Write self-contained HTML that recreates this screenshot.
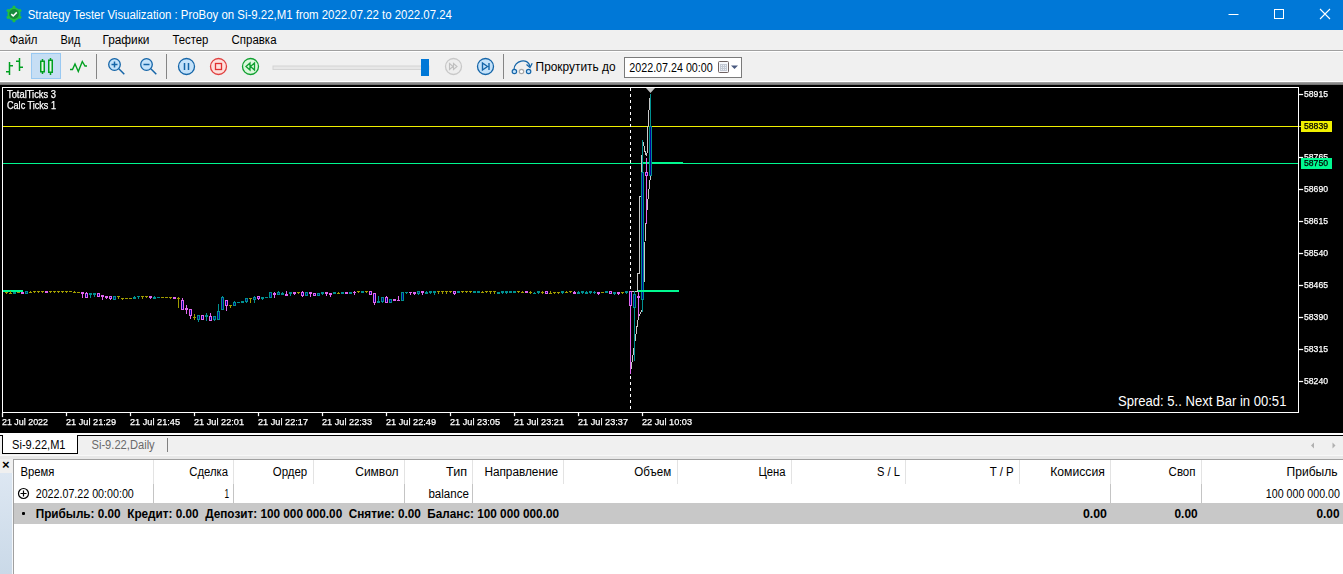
<!DOCTYPE html>
<html><head><meta charset="utf-8"><style>
*{margin:0;padding:0;box-sizing:border-box}
html,body{width:1343px;height:574px;overflow:hidden;background:#f0f0f0;font-family:"Liberation Sans",sans-serif;position:relative}
.a{position:absolute}
text{white-space:pre}
</style></head><body>
<div class="a" style="left:0;top:0;width:1343px;height:30px;background:#0078d7"></div>
<svg class="a" style="left:5px;top:5px" width="18" height="18" viewBox="5 5 18 18">
<g fill="#22c040"><circle cx="14" cy="14" r="6.6"/><rect x="12.6" y="5.8" width="2.8" height="3" rx="0.6" transform="rotate(0 14 14)"/><rect x="12.6" y="5.8" width="2.8" height="3" rx="0.6" transform="rotate(60 14 14)"/><rect x="12.6" y="5.8" width="2.8" height="3" rx="0.6" transform="rotate(120 14 14)"/><rect x="12.6" y="5.8" width="2.8" height="3" rx="0.6" transform="rotate(180 14 14)"/><rect x="12.6" y="5.8" width="2.8" height="3" rx="0.6" transform="rotate(240 14 14)"/><rect x="12.6" y="5.8" width="2.8" height="3" rx="0.6" transform="rotate(300 14 14)"/></g>
<circle cx="14" cy="14" r="4.9" fill="#178a3c"/>
<path d="M11.3 14.2l1.9 1.8 3.6-3.6" stroke="#fff" stroke-width="1.6" fill="none"/>
</svg>
<svg class="a" style="left:1220px;top:0" width="123" height="30">
<rect x="8.5" y="14" width="10" height="1" fill="#fff"/>
<rect x="54.5" y="9.5" width="9" height="9" fill="none" stroke="#fff"/>
<path d="M100 9l10 10M110 9l-10 10" stroke="#fff" stroke-width="1.1"/>
</svg>
<div class="a" style="left:0;top:50px;width:1343px;height:1px;background:#a0a0a0"></div>
<div class="a" style="left:0;top:51px;width:1343px;height:1px;background:#fff"></div>

<svg class="a" style="left:0;top:50px" width="760" height="35" viewBox="0 50 760 35">
<g stroke="#00a020" stroke-width="1.5" fill="none">
<path d="M9.5 62v13M6 71.75h3.5M9.5 65.75h3.5M19.5 58v13M16 61.25h3.5M19.5 67.25h3.5"/>
</g>
<rect x="31.5" y="53.5" width="29" height="25" fill="#c6def4" stroke="#99c9f2"/>
<g stroke="#00a020" stroke-width="1.5">
<path d="M42.5 59v15M50.5 58v17"/>
<rect x="40.75" y="61.25" width="3.5" height="10.5" fill="#e6f8e6"/>
<rect x="48.75" y="60.25" width="3.5" height="12" fill="#e6f8e6"/>
</g>
<polyline points="70,69.5 72.5,69.5 75,64 78.3,71.5 82.3,61.5 85,66 87,66" fill="none" stroke="#00a020" stroke-width="1.4"/>
<rect x="96" y="54" width="1" height="25" fill="#858585"/>
<g stroke="#1565a8" stroke-width="1.3" fill="#c4e2fa">
<circle cx="114.5" cy="64.5" r="5.8"/>
<circle cx="146.5" cy="64.5" r="5.8"/>
</g>
<g stroke="#1565a8" stroke-width="1.5" fill="none">
<path d="M111.5 64.5h6M114.5 61.5v6M118.8 68.8l5.5 5.5M143.5 64.5h6M150.8 68.8l5.5 5.5"/>
</g>
<rect x="166" y="54" width="1" height="25" fill="#858585"/>
<circle cx="186.5" cy="66.5" r="8" stroke="#1565a8" stroke-width="1.3" fill="#c4e2fa"/>
<path d="M184.5 63v7M188.5 63v7" stroke="#1565a8" stroke-width="1.5"/>
<circle cx="218.5" cy="66.5" r="8" stroke="#e04040" stroke-width="1.3" fill="#fde0dc"/>
<rect x="215.5" y="63.5" width="6" height="6" stroke="#e03030" stroke-width="1.3" fill="none"/>
<circle cx="250.5" cy="66.5" r="8" stroke="#10a030" stroke-width="1.3" fill="#dcf8dc"/>
<path d="M250 63l-4 3.5 4 3.5zM254.5 63l-4 3.5 4 3.5z" stroke="#10a030" stroke-width="1.3" fill="none"/>
<rect x="273" y="66" width="156" height="3.5" fill="#e7e7e7" stroke="#d4d4d4" stroke-width="1"/>
<rect x="421" y="59" width="8" height="17" fill="#0078d7"/>
<circle cx="453.5" cy="66.5" r="8" stroke="#c8c8c8" stroke-width="1.3" fill="#eeeeee"/>
<path d="M449.5 63.5l3.5 3-3.5 3zM453.5 63.5l3.5 3-3.5 3z" stroke="#c0c0c0" stroke-width="1.1" fill="none"/>
<circle cx="485.5" cy="66.5" r="8" stroke="#1565a8" stroke-width="1.3" fill="#c4e2fa"/>
<path d="M482.5 63v7l5-3.5zM489 63v7" stroke="#1565a8" stroke-width="1.4" fill="none"/>
<rect x="503" y="54" width="1" height="25" fill="#858585"/>
<path d="M514 69.5C514 60.5 528 57 530 66.5" stroke="#1565a8" stroke-width="1.3" fill="none"/>
<path d="M526.5 64.5l3.5 3 2.2-4.2" stroke="#1565a8" stroke-width="1.3" fill="none"/>
<circle cx="514.4" cy="71.5" r="2.2" stroke="#1565a8" stroke-width="1.2" fill="#c4e2fa"/>
<circle cx="521.5" cy="71.5" r="2.2" stroke="#a8a8a8" stroke-width="1.2" fill="#fff"/>
<circle cx="528.6" cy="71.5" r="2.2" stroke="#1565a8" stroke-width="1.2" fill="#c4e2fa"/>
<rect x="624.5" y="57.5" width="117" height="20" fill="#fff" stroke="#7a7a7a"/>
<rect x="718.5" y="61.5" width="10" height="11" rx="1" fill="#f6f7fb" stroke="#6e6262"/>
<rect x="720" y="64" width="7" height="7" fill="#c3c9d4"/>
<g fill="#eef0f6"><rect x="721" y="65" width="1" height="1"/><rect x="723" y="65" width="1" height="1"/><rect x="725" y="65" width="1" height="1"/><rect x="721" y="67" width="1" height="1"/><rect x="723" y="67" width="1" height="1"/><rect x="725" y="67" width="1" height="1"/><rect x="721" y="69" width="1" height="1"/><rect x="723" y="69" width="1" height="1"/><rect x="725" y="69" width="1" height="1"/></g>
<path d="M731 65.5h7l-3.5 3.5z" fill="#4a5a80"/>
</svg>

<div class="a" style="left:0;top:81px;width:1343px;height:1px;background:#fff"></div>
<div class="a" style="left:0;top:82px;width:1343px;height:3px;background:linear-gradient(#a8a8a8,#6a6a6a)"></div>

<svg class="a" style="left:0;top:0" width="1343" height="574" viewBox="0 0 1343 574" shape-rendering="crispEdges">
<rect x="0" y="85" width="1343" height="348" fill="#000"/>
<rect x="2" y="87" width="1297" height="1" fill="#fff"/>
<rect x="2" y="412" width="1297" height="1" fill="#fff"/>
<rect x="2" y="87" width="1" height="326" fill="#fff"/>
<rect x="1298" y="87" width="1" height="326" fill="#fff"/>
<rect x="3" y="126" width="1295" height="1" fill="#f0f000"/>
<rect x="3" y="163" width="1295" height="1" fill="#00f890"/>
<rect x="643" y="162" width="40" height="2" fill="#00f890"/>
<rect x="3" y="290" width="20" height="2" fill="#00f890"/>
<rect x="630" y="88" width="1" height="3" fill="#fff"/>
<rect x="630" y="94" width="1" height="3" fill="#fff"/>
<rect x="630" y="100" width="1" height="3" fill="#fff"/>
<rect x="630" y="106" width="1" height="3" fill="#fff"/>
<rect x="630" y="112" width="1" height="3" fill="#fff"/>
<rect x="630" y="118" width="1" height="3" fill="#fff"/>
<rect x="630" y="124" width="1" height="3" fill="#fff"/>
<rect x="630" y="130" width="1" height="3" fill="#fff"/>
<rect x="630" y="136" width="1" height="3" fill="#fff"/>
<rect x="630" y="142" width="1" height="3" fill="#fff"/>
<rect x="630" y="148" width="1" height="3" fill="#fff"/>
<rect x="630" y="154" width="1" height="3" fill="#fff"/>
<rect x="630" y="160" width="1" height="3" fill="#fff"/>
<rect x="630" y="166" width="1" height="3" fill="#fff"/>
<rect x="630" y="172" width="1" height="3" fill="#fff"/>
<rect x="630" y="178" width="1" height="3" fill="#fff"/>
<rect x="630" y="184" width="1" height="3" fill="#fff"/>
<rect x="630" y="190" width="1" height="3" fill="#fff"/>
<rect x="630" y="196" width="1" height="3" fill="#fff"/>
<rect x="630" y="202" width="1" height="3" fill="#fff"/>
<rect x="630" y="208" width="1" height="3" fill="#fff"/>
<rect x="630" y="214" width="1" height="3" fill="#fff"/>
<rect x="630" y="220" width="1" height="3" fill="#fff"/>
<rect x="630" y="226" width="1" height="3" fill="#fff"/>
<rect x="630" y="232" width="1" height="3" fill="#fff"/>
<rect x="630" y="238" width="1" height="3" fill="#fff"/>
<rect x="630" y="244" width="1" height="3" fill="#fff"/>
<rect x="630" y="250" width="1" height="3" fill="#fff"/>
<rect x="630" y="256" width="1" height="3" fill="#fff"/>
<rect x="630" y="262" width="1" height="3" fill="#fff"/>
<rect x="630" y="268" width="1" height="3" fill="#fff"/>
<rect x="630" y="274" width="1" height="3" fill="#fff"/>
<rect x="630" y="280" width="1" height="3" fill="#fff"/>
<rect x="630" y="286" width="1" height="3" fill="#fff"/>
<rect x="630" y="292" width="1" height="3" fill="#fff"/>
<rect x="630" y="298" width="1" height="3" fill="#fff"/>
<rect x="630" y="304" width="1" height="3" fill="#fff"/>
<rect x="630" y="310" width="1" height="3" fill="#fff"/>
<rect x="630" y="316" width="1" height="3" fill="#fff"/>
<rect x="630" y="322" width="1" height="3" fill="#fff"/>
<rect x="630" y="328" width="1" height="3" fill="#fff"/>
<rect x="630" y="334" width="1" height="3" fill="#fff"/>
<rect x="630" y="340" width="1" height="3" fill="#fff"/>
<rect x="630" y="346" width="1" height="3" fill="#fff"/>
<rect x="630" y="352" width="1" height="3" fill="#fff"/>
<rect x="630" y="358" width="1" height="3" fill="#fff"/>
<rect x="630" y="364" width="1" height="3" fill="#fff"/>
<rect x="630" y="370" width="1" height="3" fill="#fff"/>
<rect x="630" y="376" width="1" height="3" fill="#fff"/>
<rect x="630" y="382" width="1" height="3" fill="#fff"/>
<rect x="630" y="388" width="1" height="3" fill="#fff"/>
<rect x="630" y="394" width="1" height="3" fill="#fff"/>
<rect x="630" y="400" width="1" height="3" fill="#fff"/>
<rect x="630" y="406" width="1" height="3" fill="#fff"/>
<g fill="none" stroke="#c8c8c8" stroke-width="1">
<polyline points="630.5,291.5 637.5,291.5 637.5,273.5 639.5,273.5 639.5,196.5 641.5,196.5 641.5,159 643.5,142 644.5,150 646.5,156 647.5,150 647.5,135 648.5,118 649.5,102 650.5,94"/>
<polyline points="650.5,176 648.5,194 647.5,205 646.5,216 645.5,231 644.5,253 644.5,276 642.5,300 642,310 638.5,317 637.5,323 630.5,373"/>
</g>
<rect x="6" y="292" width="1" height="2" fill="#a09c00"/>
<rect x="5" y="292" width="3" height="1" fill="#a09c00"/>
<rect x="10" y="291" width="1" height="3" fill="#a09c00"/>
<rect x="9" y="293" width="3" height="1" fill="#a09c00"/>
<rect x="14" y="292" width="1" height="2" fill="#009090"/>
<rect x="13" y="292" width="3" height="2" fill="#009090"/>
<rect x="17" y="292" width="3" height="1" fill="#a09c00"/>
<rect x="22" y="292" width="1" height="2" fill="#e066f0"/>
<rect x="21" y="292" width="3" height="2" fill="#e066f0"/>
<rect x="26" y="291" width="1" height="3" fill="#009090"/>
<rect x="25" y="291" width="3" height="3" fill="#009090"/>
<rect x="26" y="292" width="1" height="1" fill="#000098"/>
<rect x="30" y="291" width="1" height="2" fill="#a09c00"/>
<rect x="29" y="292" width="3" height="1" fill="#a09c00"/>
<rect x="34" y="291" width="1" height="2" fill="#a09c00"/>
<rect x="33" y="291" width="3" height="1" fill="#a09c00"/>
<rect x="38" y="291" width="1" height="2" fill="#a09c00"/>
<rect x="37" y="291" width="3" height="1" fill="#a09c00"/>
<rect x="42" y="291" width="1" height="2" fill="#a09c00"/>
<rect x="41" y="291" width="3" height="1" fill="#a09c00"/>
<rect x="46" y="291" width="1" height="2" fill="#e066f0"/>
<rect x="45" y="291" width="3" height="2" fill="#e066f0"/>
<rect x="50" y="291" width="1" height="2" fill="#a09c00"/>
<rect x="49" y="291" width="3" height="1" fill="#a09c00"/>
<rect x="54" y="291" width="1" height="2" fill="#a09c00"/>
<rect x="53" y="291" width="3" height="1" fill="#a09c00"/>
<rect x="58" y="291" width="1" height="2" fill="#a09c00"/>
<rect x="57" y="291" width="3" height="1" fill="#a09c00"/>
<rect x="62" y="291" width="1" height="2" fill="#a09c00"/>
<rect x="61" y="291" width="3" height="1" fill="#a09c00"/>
<rect x="66" y="291" width="1" height="2" fill="#a09c00"/>
<rect x="65" y="291" width="3" height="1" fill="#a09c00"/>
<rect x="69" y="291" width="3" height="1" fill="#a09c00"/>
<rect x="74" y="291" width="1" height="2" fill="#a09c00"/>
<rect x="73" y="292" width="3" height="1" fill="#a09c00"/>
<rect x="77" y="292" width="3" height="1" fill="#a09c00"/>
<rect x="82" y="292" width="1" height="6" fill="#e066f0"/>
<rect x="81" y="292" width="3" height="2" fill="#e066f0"/>
<rect x="86" y="292" width="1" height="6" fill="#e066f0"/>
<rect x="85" y="293" width="3" height="5" fill="#e066f0"/>
<rect x="86" y="294" width="1" height="3" fill="#000098"/>
<rect x="90" y="293" width="1" height="5" fill="#009090"/>
<rect x="89" y="293" width="3" height="2" fill="#009090"/>
<rect x="94" y="293" width="1" height="4" fill="#009090"/>
<rect x="93" y="293" width="3" height="2" fill="#009090"/>
<rect x="98" y="293" width="1" height="4" fill="#e066f0"/>
<rect x="97" y="293" width="3" height="4" fill="#e066f0"/>
<rect x="98" y="294" width="1" height="2" fill="#000098"/>
<rect x="102" y="295" width="1" height="5" fill="#e066f0"/>
<rect x="101" y="295" width="3" height="2" fill="#e066f0"/>
<rect x="106" y="296" width="1" height="3" fill="#e066f0"/>
<rect x="105" y="296" width="3" height="2" fill="#e066f0"/>
<rect x="110" y="296" width="1" height="4" fill="#e066f0"/>
<rect x="109" y="296" width="3" height="3" fill="#e066f0"/>
<rect x="110" y="297" width="1" height="1" fill="#000098"/>
<rect x="114" y="296" width="1" height="4" fill="#009090"/>
<rect x="113" y="296" width="3" height="4" fill="#009090"/>
<rect x="114" y="297" width="1" height="2" fill="#000098"/>
<rect x="118" y="296" width="1" height="3" fill="#a09c00"/>
<rect x="117" y="296" width="3" height="1" fill="#a09c00"/>
<rect x="122" y="298" width="1" height="2" fill="#a09c00"/>
<rect x="121" y="298" width="3" height="1" fill="#a09c00"/>
<rect x="125" y="298" width="3" height="1" fill="#a09c00"/>
<rect x="129" y="298" width="3" height="1" fill="#a09c00"/>
<rect x="134" y="296" width="1" height="3" fill="#009090"/>
<rect x="133" y="297" width="3" height="2" fill="#009090"/>
<rect x="138" y="296" width="1" height="3" fill="#009090"/>
<rect x="137" y="296" width="3" height="1" fill="#009090"/>
<rect x="142" y="296" width="1" height="3" fill="#a09c00"/>
<rect x="141" y="296" width="3" height="1" fill="#a09c00"/>
<rect x="146" y="296" width="1" height="2" fill="#a09c00"/>
<rect x="145" y="296" width="3" height="1" fill="#a09c00"/>
<rect x="150" y="296" width="1" height="3" fill="#e066f0"/>
<rect x="149" y="296" width="3" height="2" fill="#e066f0"/>
<rect x="154" y="296" width="1" height="3" fill="#009090"/>
<rect x="153" y="297" width="3" height="2" fill="#009090"/>
<rect x="157" y="297" width="3" height="1" fill="#009090"/>
<rect x="161" y="297" width="3" height="1" fill="#a09c00"/>
<rect x="165" y="297" width="3" height="1" fill="#a09c00"/>
<rect x="170" y="297" width="1" height="2" fill="#a09c00"/>
<rect x="169" y="297" width="3" height="1" fill="#a09c00"/>
<rect x="174" y="297" width="1" height="2" fill="#e066f0"/>
<rect x="173" y="297" width="3" height="2" fill="#e066f0"/>
<rect x="178" y="297" width="1" height="11" fill="#a09c00"/>
<rect x="177" y="298" width="3" height="1" fill="#a09c00"/>
<rect x="182" y="298" width="1" height="12" fill="#e066f0"/>
<rect x="181" y="300" width="3" height="10" fill="#e066f0"/>
<rect x="182" y="301" width="1" height="8" fill="#000098"/>
<rect x="186" y="305" width="1" height="9" fill="#e066f0"/>
<rect x="185" y="308" width="3" height="2" fill="#e066f0"/>
<rect x="190" y="309" width="1" height="10" fill="#e066f0"/>
<rect x="189" y="309" width="3" height="7" fill="#e066f0"/>
<rect x="190" y="310" width="1" height="5" fill="#000098"/>
<rect x="194" y="314" width="1" height="6" fill="#a09c00"/>
<rect x="193" y="317" width="3" height="1" fill="#a09c00"/>
<rect x="198" y="315" width="1" height="7" fill="#009090"/>
<rect x="197" y="315" width="3" height="5" fill="#009090"/>
<rect x="198" y="316" width="1" height="3" fill="#000098"/>
<rect x="202" y="315" width="1" height="5" fill="#e066f0"/>
<rect x="201" y="315" width="3" height="5" fill="#e066f0"/>
<rect x="202" y="316" width="1" height="3" fill="#000098"/>
<rect x="206" y="313" width="1" height="8" fill="#009090"/>
<rect x="205" y="315" width="3" height="2" fill="#009090"/>
<rect x="210" y="313" width="1" height="8" fill="#e066f0"/>
<rect x="209" y="316" width="3" height="5" fill="#e066f0"/>
<rect x="210" y="317" width="1" height="3" fill="#000098"/>
<rect x="214" y="316" width="1" height="5" fill="#009090"/>
<rect x="213" y="316" width="3" height="4" fill="#009090"/>
<rect x="214" y="317" width="1" height="2" fill="#000098"/>
<rect x="218" y="304" width="1" height="16" fill="#009090"/>
<rect x="217" y="311" width="3" height="9" fill="#009090"/>
<rect x="218" y="312" width="1" height="7" fill="#000098"/>
<rect x="222" y="296" width="1" height="14" fill="#009090"/>
<rect x="221" y="297" width="3" height="13" fill="#009090"/>
<rect x="222" y="298" width="1" height="11" fill="#000098"/>
<rect x="226" y="300" width="1" height="11" fill="#e066f0"/>
<rect x="225" y="300" width="3" height="6" fill="#e066f0"/>
<rect x="226" y="301" width="1" height="4" fill="#000098"/>
<rect x="230" y="305" width="1" height="3" fill="#a09c00"/>
<rect x="229" y="305" width="3" height="1" fill="#a09c00"/>
<rect x="234" y="301" width="1" height="5" fill="#009090"/>
<rect x="233" y="302" width="3" height="4" fill="#009090"/>
<rect x="234" y="303" width="1" height="2" fill="#000098"/>
<rect x="237" y="302" width="3" height="1" fill="#009090"/>
<rect x="242" y="301" width="1" height="2" fill="#009090"/>
<rect x="241" y="301" width="3" height="2" fill="#009090"/>
<rect x="246" y="298" width="1" height="5" fill="#009090"/>
<rect x="245" y="298" width="3" height="4" fill="#009090"/>
<rect x="246" y="299" width="1" height="2" fill="#000098"/>
<rect x="250" y="298" width="1" height="5" fill="#a09c00"/>
<rect x="249" y="298" width="3" height="1" fill="#a09c00"/>
<rect x="254" y="296" width="1" height="7" fill="#009090"/>
<rect x="253" y="297" width="3" height="3" fill="#009090"/>
<rect x="254" y="298" width="1" height="1" fill="#000098"/>
<rect x="258" y="296" width="1" height="4" fill="#e066f0"/>
<rect x="257" y="296" width="3" height="3" fill="#e066f0"/>
<rect x="258" y="297" width="1" height="1" fill="#000098"/>
<rect x="262" y="297" width="1" height="3" fill="#009090"/>
<rect x="261" y="297" width="3" height="2" fill="#009090"/>
<rect x="265" y="297" width="3" height="1" fill="#009090"/>
<rect x="270" y="292" width="1" height="6" fill="#009090"/>
<rect x="269" y="292" width="3" height="6" fill="#009090"/>
<rect x="270" y="293" width="1" height="4" fill="#000098"/>
<rect x="274" y="292" width="1" height="6" fill="#e066f0"/>
<rect x="273" y="293" width="3" height="2" fill="#e066f0"/>
<rect x="278" y="291" width="1" height="4" fill="#009090"/>
<rect x="277" y="292" width="3" height="3" fill="#009090"/>
<rect x="278" y="293" width="1" height="1" fill="#000098"/>
<rect x="282" y="292" width="1" height="3" fill="#009090"/>
<rect x="281" y="293" width="3" height="2" fill="#009090"/>
<rect x="286" y="291" width="1" height="5" fill="#e066f0"/>
<rect x="285" y="294" width="3" height="2" fill="#e066f0"/>
<rect x="290" y="292" width="1" height="4" fill="#009090"/>
<rect x="289" y="292" width="3" height="2" fill="#009090"/>
<rect x="294" y="292" width="1" height="3" fill="#e066f0"/>
<rect x="293" y="292" width="3" height="2" fill="#e066f0"/>
<rect x="298" y="292" width="1" height="2" fill="#a09c00"/>
<rect x="297" y="292" width="3" height="1" fill="#a09c00"/>
<rect x="302" y="291" width="1" height="6" fill="#e066f0"/>
<rect x="301" y="292" width="3" height="4" fill="#e066f0"/>
<rect x="302" y="293" width="1" height="2" fill="#000098"/>
<rect x="306" y="292" width="1" height="4" fill="#009090"/>
<rect x="305" y="292" width="3" height="4" fill="#009090"/>
<rect x="306" y="293" width="1" height="2" fill="#000098"/>
<rect x="310" y="292" width="1" height="5" fill="#e066f0"/>
<rect x="309" y="292" width="3" height="2" fill="#e066f0"/>
<rect x="314" y="293" width="1" height="3" fill="#e066f0"/>
<rect x="313" y="293" width="3" height="3" fill="#e066f0"/>
<rect x="314" y="294" width="1" height="1" fill="#000098"/>
<rect x="318" y="293" width="1" height="3" fill="#009090"/>
<rect x="317" y="293" width="3" height="3" fill="#009090"/>
<rect x="318" y="294" width="1" height="1" fill="#000098"/>
<rect x="322" y="292" width="1" height="3" fill="#009090"/>
<rect x="321" y="292" width="3" height="2" fill="#009090"/>
<rect x="326" y="292" width="1" height="4" fill="#e066f0"/>
<rect x="325" y="292" width="3" height="2" fill="#e066f0"/>
<rect x="330" y="293" width="1" height="4" fill="#e066f0"/>
<rect x="329" y="293" width="3" height="2" fill="#e066f0"/>
<rect x="334" y="292" width="1" height="2" fill="#009090"/>
<rect x="333" y="292" width="3" height="2" fill="#009090"/>
<rect x="338" y="292" width="1" height="2" fill="#a09c00"/>
<rect x="337" y="293" width="3" height="1" fill="#a09c00"/>
<rect x="342" y="292" width="1" height="2" fill="#009090"/>
<rect x="341" y="292" width="3" height="2" fill="#009090"/>
<rect x="346" y="292" width="1" height="2" fill="#e066f0"/>
<rect x="345" y="292" width="3" height="2" fill="#e066f0"/>
<rect x="350" y="292" width="1" height="2" fill="#009090"/>
<rect x="349" y="292" width="3" height="2" fill="#009090"/>
<rect x="354" y="291" width="1" height="4" fill="#e066f0"/>
<rect x="353" y="292" width="3" height="1" fill="#e066f0"/>
<rect x="358" y="291" width="1" height="2" fill="#a09c00"/>
<rect x="357" y="291" width="3" height="1" fill="#a09c00"/>
<rect x="362" y="291" width="1" height="2" fill="#009090"/>
<rect x="361" y="291" width="3" height="2" fill="#009090"/>
<rect x="366" y="291" width="1" height="2" fill="#a09c00"/>
<rect x="365" y="291" width="3" height="1" fill="#a09c00"/>
<rect x="370" y="291" width="1" height="4" fill="#e066f0"/>
<rect x="369" y="291" width="3" height="4" fill="#e066f0"/>
<rect x="370" y="292" width="1" height="2" fill="#000098"/>
<rect x="374" y="293" width="1" height="12" fill="#e066f0"/>
<rect x="373" y="293" width="3" height="10" fill="#e066f0"/>
<rect x="374" y="294" width="1" height="8" fill="#000098"/>
<rect x="378" y="296" width="1" height="7" fill="#009090"/>
<rect x="377" y="301" width="3" height="2" fill="#009090"/>
<rect x="382" y="297" width="1" height="6" fill="#009090"/>
<rect x="381" y="297" width="3" height="5" fill="#009090"/>
<rect x="382" y="298" width="1" height="3" fill="#000098"/>
<rect x="386" y="296" width="1" height="7" fill="#e066f0"/>
<rect x="385" y="297" width="3" height="6" fill="#e066f0"/>
<rect x="386" y="298" width="1" height="4" fill="#000098"/>
<rect x="390" y="299" width="1" height="4" fill="#009090"/>
<rect x="389" y="299" width="3" height="4" fill="#009090"/>
<rect x="390" y="300" width="1" height="2" fill="#000098"/>
<rect x="394" y="299" width="1" height="2" fill="#e066f0"/>
<rect x="393" y="299" width="3" height="2" fill="#e066f0"/>
<rect x="398" y="296" width="1" height="5" fill="#e066f0"/>
<rect x="397" y="300" width="3" height="1" fill="#e066f0"/>
<rect x="402" y="292" width="1" height="9" fill="#009090"/>
<rect x="401" y="292" width="3" height="9" fill="#009090"/>
<rect x="402" y="293" width="1" height="7" fill="#000098"/>
<rect x="406" y="292" width="1" height="2" fill="#009090"/>
<rect x="405" y="292" width="3" height="1" fill="#009090"/>
<rect x="410" y="292" width="1" height="3" fill="#e066f0"/>
<rect x="409" y="292" width="3" height="1" fill="#e066f0"/>
<rect x="414" y="292" width="1" height="3" fill="#e066f0"/>
<rect x="413" y="292" width="3" height="2" fill="#e066f0"/>
<rect x="418" y="291" width="1" height="4" fill="#009090"/>
<rect x="417" y="291" width="3" height="3" fill="#009090"/>
<rect x="418" y="292" width="1" height="1" fill="#000098"/>
<rect x="422" y="291" width="1" height="4" fill="#e066f0"/>
<rect x="421" y="291" width="3" height="2" fill="#e066f0"/>
<rect x="426" y="291" width="1" height="3" fill="#009090"/>
<rect x="425" y="292" width="3" height="2" fill="#009090"/>
<rect x="430" y="291" width="1" height="3" fill="#009090"/>
<rect x="429" y="291" width="3" height="2" fill="#009090"/>
<rect x="434" y="291" width="1" height="4" fill="#009090"/>
<rect x="433" y="291" width="3" height="2" fill="#009090"/>
<rect x="438" y="291" width="1" height="3" fill="#a09c00"/>
<rect x="437" y="291" width="3" height="1" fill="#a09c00"/>
<rect x="442" y="291" width="1" height="3" fill="#a09c00"/>
<rect x="441" y="291" width="3" height="1" fill="#a09c00"/>
<rect x="446" y="291" width="1" height="3" fill="#a09c00"/>
<rect x="445" y="291" width="3" height="1" fill="#a09c00"/>
<rect x="450" y="291" width="1" height="2" fill="#a09c00"/>
<rect x="449" y="291" width="3" height="1" fill="#a09c00"/>
<rect x="454" y="291" width="1" height="4" fill="#e066f0"/>
<rect x="453" y="291" width="3" height="3" fill="#e066f0"/>
<rect x="454" y="292" width="1" height="1" fill="#000098"/>
<rect x="458" y="291" width="1" height="2" fill="#009090"/>
<rect x="457" y="291" width="3" height="2" fill="#009090"/>
<rect x="462" y="291" width="1" height="2" fill="#a09c00"/>
<rect x="461" y="291" width="3" height="1" fill="#a09c00"/>
<rect x="466" y="291" width="1" height="2" fill="#a09c00"/>
<rect x="465" y="291" width="3" height="1" fill="#a09c00"/>
<rect x="470" y="291" width="1" height="2" fill="#a09c00"/>
<rect x="469" y="291" width="3" height="1" fill="#a09c00"/>
<rect x="474" y="291" width="1" height="2" fill="#009090"/>
<rect x="473" y="291" width="3" height="2" fill="#009090"/>
<rect x="478" y="291" width="1" height="2" fill="#009090"/>
<rect x="477" y="291" width="3" height="2" fill="#009090"/>
<rect x="482" y="291" width="1" height="2" fill="#a09c00"/>
<rect x="481" y="292" width="3" height="1" fill="#a09c00"/>
<rect x="486" y="291" width="1" height="2" fill="#a09c00"/>
<rect x="485" y="291" width="3" height="1" fill="#a09c00"/>
<rect x="490" y="291" width="1" height="3" fill="#a09c00"/>
<rect x="489" y="291" width="3" height="1" fill="#a09c00"/>
<rect x="494" y="291" width="1" height="3" fill="#a09c00"/>
<rect x="493" y="291" width="3" height="1" fill="#a09c00"/>
<rect x="498" y="292" width="1" height="2" fill="#009090"/>
<rect x="497" y="292" width="3" height="2" fill="#009090"/>
<rect x="502" y="291" width="1" height="3" fill="#009090"/>
<rect x="501" y="291" width="3" height="2" fill="#009090"/>
<rect x="506" y="291" width="1" height="3" fill="#009090"/>
<rect x="505" y="291" width="3" height="2" fill="#009090"/>
<rect x="510" y="291" width="1" height="2" fill="#009090"/>
<rect x="509" y="291" width="3" height="2" fill="#009090"/>
<rect x="514" y="291" width="1" height="2" fill="#009090"/>
<rect x="513" y="291" width="3" height="2" fill="#009090"/>
<rect x="518" y="291" width="1" height="2" fill="#a09c00"/>
<rect x="517" y="291" width="3" height="1" fill="#a09c00"/>
<rect x="522" y="291" width="1" height="2" fill="#a09c00"/>
<rect x="521" y="292" width="3" height="1" fill="#a09c00"/>
<rect x="526" y="291" width="1" height="2" fill="#e066f0"/>
<rect x="525" y="291" width="3" height="2" fill="#e066f0"/>
<rect x="530" y="291" width="1" height="3" fill="#a09c00"/>
<rect x="529" y="292" width="3" height="1" fill="#a09c00"/>
<rect x="534" y="292" width="1" height="2" fill="#009090"/>
<rect x="533" y="293" width="3" height="1" fill="#009090"/>
<rect x="538" y="291" width="1" height="3" fill="#009090"/>
<rect x="537" y="291" width="3" height="2" fill="#009090"/>
<rect x="542" y="291" width="1" height="3" fill="#a09c00"/>
<rect x="541" y="292" width="3" height="1" fill="#a09c00"/>
<rect x="546" y="291" width="1" height="3" fill="#e066f0"/>
<rect x="545" y="291" width="3" height="3" fill="#e066f0"/>
<rect x="546" y="292" width="1" height="1" fill="#000098"/>
<rect x="550" y="291" width="1" height="3" fill="#a09c00"/>
<rect x="549" y="293" width="3" height="1" fill="#a09c00"/>
<rect x="554" y="292" width="1" height="2" fill="#a09c00"/>
<rect x="553" y="292" width="3" height="1" fill="#a09c00"/>
<rect x="558" y="292" width="1" height="2" fill="#a09c00"/>
<rect x="557" y="292" width="3" height="1" fill="#a09c00"/>
<rect x="562" y="291" width="1" height="3" fill="#009090"/>
<rect x="561" y="291" width="3" height="2" fill="#009090"/>
<rect x="566" y="291" width="1" height="2" fill="#a09c00"/>
<rect x="565" y="292" width="3" height="1" fill="#a09c00"/>
<rect x="570" y="291" width="1" height="2" fill="#a09c00"/>
<rect x="569" y="291" width="3" height="1" fill="#a09c00"/>
<rect x="574" y="291" width="1" height="3" fill="#e066f0"/>
<rect x="573" y="292" width="3" height="2" fill="#e066f0"/>
<rect x="578" y="291" width="1" height="3" fill="#009090"/>
<rect x="577" y="292" width="3" height="2" fill="#009090"/>
<rect x="582" y="291" width="1" height="3" fill="#009090"/>
<rect x="581" y="291" width="3" height="2" fill="#009090"/>
<rect x="586" y="291" width="1" height="3" fill="#009090"/>
<rect x="585" y="292" width="3" height="2" fill="#009090"/>
<rect x="590" y="291" width="1" height="3" fill="#009090"/>
<rect x="589" y="291" width="3" height="2" fill="#009090"/>
<rect x="594" y="291" width="1" height="3" fill="#009090"/>
<rect x="593" y="292" width="3" height="1" fill="#009090"/>
<rect x="598" y="292" width="1" height="3" fill="#e066f0"/>
<rect x="597" y="292" width="3" height="2" fill="#e066f0"/>
<rect x="601" y="292" width="3" height="1" fill="#a09c00"/>
<rect x="606" y="291" width="1" height="2" fill="#009090"/>
<rect x="605" y="291" width="3" height="2" fill="#009090"/>
<rect x="610" y="291" width="1" height="3" fill="#e066f0"/>
<rect x="609" y="291" width="3" height="3" fill="#e066f0"/>
<rect x="610" y="292" width="1" height="1" fill="#000098"/>
<rect x="614" y="292" width="1" height="3" fill="#009090"/>
<rect x="613" y="292" width="3" height="2" fill="#009090"/>
<rect x="618" y="292" width="1" height="3" fill="#e066f0"/>
<rect x="617" y="292" width="3" height="2" fill="#e066f0"/>
<rect x="622" y="292" width="1" height="2" fill="#a09c00"/>
<rect x="621" y="292" width="3" height="1" fill="#a09c00"/>
<rect x="626" y="291" width="1" height="3" fill="#009090"/>
<rect x="625" y="291" width="3" height="2" fill="#009090"/>
<rect x="630" y="291" width="1" height="83" fill="#e066f0"/>
<rect x="629" y="291" width="3" height="15" fill="#e066f0"/>
<rect x="630" y="292" width="1" height="13" fill="#000098"/>
<rect x="634" y="291" width="1" height="70" fill="#009090"/>
<rect x="633" y="294" width="3" height="14" fill="#009090"/>
<rect x="634" y="295" width="1" height="12" fill="#000098"/>
<rect x="638" y="292" width="1" height="25" fill="#e066f0"/>
<rect x="637" y="296" width="3" height="2" fill="#e066f0"/>
<rect x="642" y="140" width="1" height="172" fill="#009090"/>
<rect x="641" y="172" width="3" height="128" fill="#009090"/>
<rect x="642" y="173" width="1" height="126" fill="#000098"/>
<rect x="646" y="158" width="1" height="66" fill="#e066f0"/>
<rect x="645" y="172" width="3" height="4" fill="#e066f0"/>
<rect x="646" y="173" width="1" height="2" fill="#000098"/>
<rect x="650" y="94" width="1" height="82" fill="#009090"/>
<rect x="649" y="126" width="3" height="50" fill="#009090"/>
<rect x="650" y="127" width="1" height="48" fill="#000098"/>
<rect x="638" y="290" width="41" height="2" fill="#00f890"/>

<polygon points="646,88 655,88 650.5,93" fill="#c0c0c0" shape-rendering="auto"/>
<rect x="1299" y="126" width="3" height="1" fill="#f0f000"/>
</svg>

<div class="a" style="left:0;top:433px;width:1343px;height:2px;background:#fff"></div>
<div class="a" style="left:0;top:435px;width:1343px;height:1px;background:#000"></div>
<div class="a" style="left:2px;top:435px;width:76px;height:19px;background:#fff;border:1px solid #000;border-top:none"></div>
<div class="a" style="left:167px;top:438px;width:1px;height:14px;background:#808080"></div>
<svg class="a" style="left:1300px;top:438px" width="43" height="15">
<path d="M14 4.5v6l-3-3z" fill="#b0b0b0"/>
<path d="M32.5 4.5v6l3-3z" fill="#b0b0b0"/>
</svg>
<div class="a" style="left:0;top:455px;width:1343px;height:1px;background:#f8f8f8"></div>
<div class="a" style="left:0;top:456px;width:1343px;height:3px;background:#e8e8e8"></div>
<div class="a" style="left:0;top:473px;width:12px;height:101px;background:linear-gradient(#dde7f2,#cad9e8)"></div><div class="a" style="left:12px;top:473px;width:1px;height:101px;background:#f4f7fa"></div>
<div class="a" style="left:13px;top:459px;width:1330px;height:115px;background:#fff;border-left:1px solid #a0a0a0;border-top:1px solid #a0a0a0"></div>
<div class="a" style="left:14px;top:503px;width:1329px;height:21px;background:#c8c8c8"></div>
<svg class="a" style="left:0;top:0" width="1343" height="574" shape-rendering="crispEdges"><rect x="153" y="460" width="1" height="24" fill="#e3e3e3"/><rect x="233" y="460" width="1" height="24" fill="#e3e3e3"/><rect x="313" y="460" width="1" height="24" fill="#e3e3e3"/><rect x="404" y="460" width="1" height="24" fill="#e3e3e3"/><rect x="472" y="460" width="1" height="24" fill="#e3e3e3"/><rect x="563" y="460" width="1" height="24" fill="#e3e3e3"/><rect x="677" y="460" width="1" height="24" fill="#e3e3e3"/><rect x="791" y="460" width="1" height="24" fill="#e3e3e3"/><rect x="905" y="460" width="1" height="24" fill="#e3e3e3"/><rect x="1019" y="460" width="1" height="24" fill="#e3e3e3"/><rect x="1110" y="460" width="1" height="24" fill="#e3e3e3"/><rect x="1201" y="460" width="1" height="24" fill="#e3e3e3"/><rect x="153" y="484" width="1" height="19" fill="#c4c4c4"/><rect x="233" y="484" width="1" height="19" fill="#c4c4c4"/><rect x="404" y="484" width="1" height="19" fill="#c4c4c4"/><rect x="472" y="484" width="1" height="19" fill="#c4c4c4"/><rect x="1110" y="484" width="1" height="19" fill="#c4c4c4"/><rect x="1201" y="484" width="1" height="19" fill="#c4c4c4"/></svg>
<svg class="a" style="left:17px;top:487px" width="13" height="13"><circle cx="6.5" cy="6.5" r="5" stroke="#000" stroke-width="1.2" fill="none"/><path d="M6.5 3.5v6M3.5 6.5h6" stroke="#000" stroke-width="1.2"/></svg>
<div class="a" style="left:22px;top:512px;width:3px;height:3px;background:#000;border-radius:1px"></div>
<svg class="a" style="left:0;top:0;white-space:pre" width="1343" height="574" font-family='"Liberation Sans", sans-serif'><text x="27.7" y="19" font-size="12" fill="#fff" font-weight="normal" textLength="424.2" lengthAdjust="spacingAndGlyphs">Strategy Tester Visualization : ProBoy on Si-9.22,M1 from 2022.07.22 to 2022.07.24</text>
<text x="9.4" y="44" font-size="12" fill="#000" font-weight="normal" textLength="28.1" lengthAdjust="spacingAndGlyphs">Файл</text>
<text x="60.5" y="44" font-size="12" fill="#000" font-weight="normal" textLength="19.8" lengthAdjust="spacingAndGlyphs">Вид</text>
<text x="102.4" y="44" font-size="12" fill="#000" font-weight="normal" textLength="47.1" lengthAdjust="spacingAndGlyphs">Графики</text>
<text x="172.4" y="44" font-size="12" fill="#000" font-weight="normal" textLength="36.0" lengthAdjust="spacingAndGlyphs">Тестер</text>
<text x="231.6" y="44" font-size="12" fill="#000" font-weight="normal" textLength="44.9" lengthAdjust="spacingAndGlyphs">Справка</text>
<text x="535.6" y="71" font-size="12" fill="#000" font-weight="normal" textLength="79.9" lengthAdjust="spacingAndGlyphs">Прокрутить до</text>
<text x="629.3" y="72" font-size="12" fill="#000" font-weight="normal" textLength="83.4" lengthAdjust="spacingAndGlyphs">2022.07.24 00:00</text>
<text x="12.1" y="449" font-size="12" fill="#000" font-weight="normal" textLength="53.4" lengthAdjust="spacingAndGlyphs">Si-9.22,M1</text>
<text x="91.5" y="449" font-size="12" fill="#6a6a6a" font-weight="normal" textLength="63.2" lengthAdjust="spacingAndGlyphs">Si-9.22,Daily</text>
<text x="20.6" y="476" font-size="12" fill="#000" font-weight="normal" textLength="33.8" lengthAdjust="spacingAndGlyphs">Время</text>
<text x="189.3" y="476" font-size="12" fill="#000" font-weight="normal" textLength="38.8" lengthAdjust="spacingAndGlyphs">Сделка</text>
<text x="272.8" y="476" font-size="12" fill="#000" font-weight="normal" textLength="34.4" lengthAdjust="spacingAndGlyphs">Ордер</text>
<text x="355.2" y="476" font-size="12" fill="#000" font-weight="normal" textLength="43.4" lengthAdjust="spacingAndGlyphs">Символ</text>
<text x="446.0" y="476" font-size="12" fill="#000" font-weight="normal" textLength="21.0" lengthAdjust="spacingAndGlyphs">Тип</text>
<text x="484.4" y="476" font-size="12" fill="#000" font-weight="normal" textLength="73.7" lengthAdjust="spacingAndGlyphs">Направление</text>
<text x="634.3" y="476" font-size="12" fill="#000" font-weight="normal" textLength="36.9" lengthAdjust="spacingAndGlyphs">Объем</text>
<text x="758.4" y="476" font-size="12" fill="#000" font-weight="normal" textLength="27.0" lengthAdjust="spacingAndGlyphs">Цена</text>
<text x="877.1" y="476" font-size="12" fill="#000" font-weight="normal" textLength="22.9" lengthAdjust="spacingAndGlyphs">S / L</text>
<text x="989.7" y="476" font-size="12" fill="#000" font-weight="normal" textLength="24.0" lengthAdjust="spacingAndGlyphs">T / P</text>
<text x="1050.2" y="476" font-size="12" fill="#000" font-weight="normal" textLength="54.6" lengthAdjust="spacingAndGlyphs">Комиссия</text>
<text x="1168.6" y="476" font-size="12" fill="#000" font-weight="normal" textLength="26.9" lengthAdjust="spacingAndGlyphs">Своп</text>
<text x="1286.6" y="476" font-size="12" fill="#000" font-weight="normal" textLength="51.0" lengthAdjust="spacingAndGlyphs">Прибыль</text>
<text x="35.7" y="498" font-size="12" fill="#000" font-weight="normal" textLength="98.1" lengthAdjust="spacingAndGlyphs">2022.07.22 00:00:00</text>
<text x="224.5" y="498" font-size="12" fill="#000" font-weight="normal" textLength="4.6" lengthAdjust="spacingAndGlyphs">1</text>
<text x="428.4" y="498" font-size="12" fill="#000" font-weight="normal" textLength="40.5" lengthAdjust="spacingAndGlyphs">balance</text>
<text x="1265.8" y="498" font-size="12" fill="#000" font-weight="normal" textLength="74.1" lengthAdjust="spacingAndGlyphs">100 000 000.00</text>
<text x="35.7" y="518" font-size="12" fill="#000" font-weight="bold" textLength="523.3" lengthAdjust="spacingAndGlyphs">Прибыль: 0.00  Кредит: 0.00  Депозит: 100 000 000.00  Снятие: 0.00  Баланс: 100 000 000.00</text>
<text x="1082.9" y="518" font-size="12" fill="#000" font-weight="bold" textLength="24.0" lengthAdjust="spacingAndGlyphs">0.00</text>
<text x="1174.5" y="518" font-size="12" fill="#000" font-weight="bold" textLength="23.1" lengthAdjust="spacingAndGlyphs">0.00</text>
<text x="1316.5" y="518" font-size="12" fill="#000" font-weight="bold" textLength="23.0" lengthAdjust="spacingAndGlyphs">0.00</text>
<text x="1118.0" y="406.3" font-size="14" fill="#fff" font-weight="normal" textLength="168.4" lengthAdjust="spacingAndGlyphs">Spread: 5.. Next Bar in 00:51</text>
<text x="2" y="469" font-size="13" font-weight="bold" fill="#000">×</text></svg>

<svg class="a" style="left:0;top:0;will-change:transform" width="1343" height="574" viewBox="0 0 1343 574" shape-rendering="crispEdges">
<g shape-rendering="auto" font-family='"Liberation Sans", sans-serif' stroke="#fff" stroke-width="0.25">
<rect x="1299" y="94" width="4" height="1" fill="#fff"/>
<text x="1304.0" y="97" font-size="9.2" fill="#fff" font-weight="normal" textLength="24.0" lengthAdjust="spacingAndGlyphs">58915</text>
<rect x="1299" y="157" width="4" height="1" fill="#fff"/>
<text x="1304.0" y="160" font-size="9.2" fill="#fff" font-weight="normal" textLength="24.0" lengthAdjust="spacingAndGlyphs">58765</text>
<rect x="1299" y="189" width="4" height="1" fill="#fff"/>
<text x="1304.0" y="192" font-size="9.2" fill="#fff" font-weight="normal" textLength="24.0" lengthAdjust="spacingAndGlyphs">58690</text>
<rect x="1299" y="221" width="4" height="1" fill="#fff"/>
<text x="1304.0" y="224" font-size="9.2" fill="#fff" font-weight="normal" textLength="24.0" lengthAdjust="spacingAndGlyphs">58615</text>
<rect x="1299" y="253" width="4" height="1" fill="#fff"/>
<text x="1304.0" y="256" font-size="9.2" fill="#fff" font-weight="normal" textLength="24.0" lengthAdjust="spacingAndGlyphs">58540</text>
<rect x="1299" y="285" width="4" height="1" fill="#fff"/>
<text x="1304.0" y="288" font-size="9.2" fill="#fff" font-weight="normal" textLength="24.0" lengthAdjust="spacingAndGlyphs">58465</text>
<rect x="1299" y="317" width="4" height="1" fill="#fff"/>
<text x="1304.0" y="320" font-size="9.2" fill="#fff" font-weight="normal" textLength="24.0" lengthAdjust="spacingAndGlyphs">58390</text>
<rect x="1299" y="349" width="4" height="1" fill="#fff"/>
<text x="1304.0" y="352" font-size="9.2" fill="#fff" font-weight="normal" textLength="24.0" lengthAdjust="spacingAndGlyphs">58315</text>
<rect x="1299" y="381" width="4" height="1" fill="#fff"/>
<text x="1304.0" y="384" font-size="9.2" fill="#fff" font-weight="normal" textLength="24.0" lengthAdjust="spacingAndGlyphs">58240</text>
<rect x="2" y="413" width="1" height="4" fill="#fff"/>
<text x="2.0" y="424.6" font-size="9.5" fill="#fff" font-weight="normal" textLength="46.0" lengthAdjust="spacingAndGlyphs">21 Jul 2022</text>
<rect x="66" y="413" width="1" height="3" fill="#fff"/>
<text x="66.0" y="424.6" font-size="9.5" fill="#fff" font-weight="normal" textLength="50.0" lengthAdjust="spacingAndGlyphs">21 Jul 21:29</text>
<rect x="130" y="413" width="1" height="3" fill="#fff"/>
<text x="130.0" y="424.6" font-size="9.5" fill="#fff" font-weight="normal" textLength="50.0" lengthAdjust="spacingAndGlyphs">21 Jul 21:45</text>
<rect x="194" y="413" width="1" height="3" fill="#fff"/>
<text x="194.0" y="424.6" font-size="9.5" fill="#fff" font-weight="normal" textLength="50.0" lengthAdjust="spacingAndGlyphs">21 Jul 22:01</text>
<rect x="258" y="413" width="1" height="3" fill="#fff"/>
<text x="258.0" y="424.6" font-size="9.5" fill="#fff" font-weight="normal" textLength="50.0" lengthAdjust="spacingAndGlyphs">21 Jul 22:17</text>
<rect x="322" y="413" width="1" height="3" fill="#fff"/>
<text x="322.0" y="424.6" font-size="9.5" fill="#fff" font-weight="normal" textLength="50.0" lengthAdjust="spacingAndGlyphs">21 Jul 22:33</text>
<rect x="386" y="413" width="1" height="3" fill="#fff"/>
<text x="386.0" y="424.6" font-size="9.5" fill="#fff" font-weight="normal" textLength="50.0" lengthAdjust="spacingAndGlyphs">21 Jul 22:49</text>
<rect x="450" y="413" width="1" height="3" fill="#fff"/>
<text x="450.0" y="424.6" font-size="9.5" fill="#fff" font-weight="normal" textLength="50.0" lengthAdjust="spacingAndGlyphs">21 Jul 23:05</text>
<rect x="514" y="413" width="1" height="3" fill="#fff"/>
<text x="514.0" y="424.6" font-size="9.5" fill="#fff" font-weight="normal" textLength="50.0" lengthAdjust="spacingAndGlyphs">21 Jul 23:21</text>
<rect x="578" y="413" width="1" height="3" fill="#fff"/>
<text x="578.0" y="424.6" font-size="9.5" fill="#fff" font-weight="normal" textLength="50.0" lengthAdjust="spacingAndGlyphs">21 Jul 23:37</text>
<rect x="642" y="413" width="1" height="3" fill="#fff"/>
<text x="642.0" y="424.6" font-size="9.5" fill="#fff" font-weight="normal" textLength="50.0" lengthAdjust="spacingAndGlyphs">22 Jul 10:03</text>
</g>
<rect x="1301" y="121" width="31" height="11" fill="#f0f000"/>
<rect x="1301" y="158" width="31" height="11" fill="#00f890"/>
<g shape-rendering="auto" font-family='"Liberation Sans", sans-serif' stroke="#000" stroke-width="0.25">
<text x="1304.0" y="129" font-size="9.2" fill="#000" font-weight="normal" textLength="24.0" lengthAdjust="spacingAndGlyphs">58839</text>
<text x="1304.0" y="166" font-size="9.2" fill="#000" font-weight="normal" textLength="24.0" lengthAdjust="spacingAndGlyphs">58750</text>
</g>
<g shape-rendering="auto" font-family='"Liberation Sans", sans-serif' stroke="#fff" stroke-width="0.25">
<text x="7.0" y="98" font-size="10" fill="#fff" font-weight="normal" textLength="49.0" lengthAdjust="spacingAndGlyphs">TotalTicks 3</text>
<text x="7.0" y="109" font-size="10" fill="#fff" font-weight="normal" textLength="49.0" lengthAdjust="spacingAndGlyphs">Calc Ticks 1</text>
</g>
</svg>

</body></html>
